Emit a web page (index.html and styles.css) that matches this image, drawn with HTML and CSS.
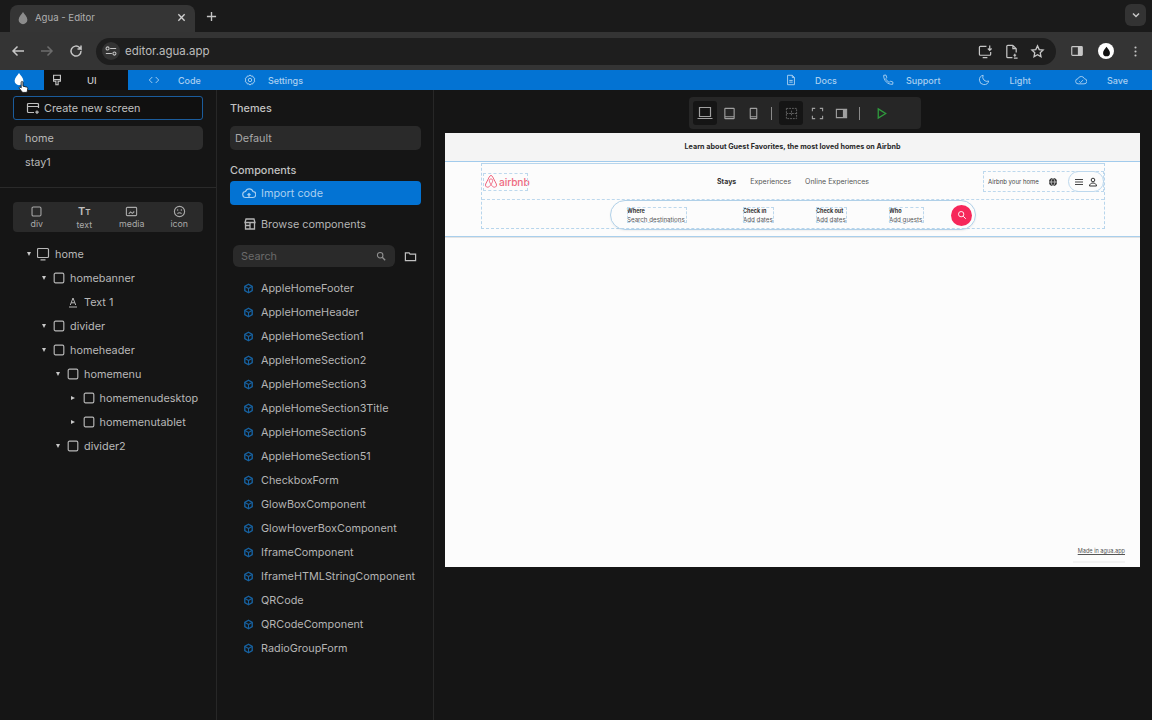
FILE: index.html
```html
<!DOCTYPE html>
<html lang="en">
<head>
<meta charset="utf-8">
<title>Agua - Editor</title>
<link rel="stylesheet" href="styles.css">
</head>
<body>
<svg class="defs" aria-hidden="true">
  <symbol id="drop" viewBox="0 0 16 16"><path d="M8 1C6 4 3 6.600 3 10a5 5 0 0 0 10 0C13 6.600 10 4 8 1z" fill="currentColor"/></symbol>
  <symbol id="box" viewBox="0 0 16 16"><rect x="2.500" y="2.500" width="11" height="11" rx="1.500" fill="none" stroke="currentColor" stroke-width="1.300"/></symbol>
  <symbol id="cube" viewBox="0 0 16 16"><g fill="none" stroke="currentColor" stroke-width="2" stroke-linejoin="round"><path d="M8 1.800l5.400 3.100v6.200L8 14.200l-5.400-3.100V4.900z"/><path d="M2.800 5L8 8l5.200-3M8 8v6" stroke-width="1.500"/></g></symbol>
</svg>

<header class="tabstrip">
  <div class="tab">
    <svg class="ic14 dim"><use href="#drop"/></svg>
    <span class="tab-title">Agua - Editor</span>
    <svg class="tab-close" viewBox="0 0 10 10"><path d="M1.500 1.500l7 7M8.500 1.500l-7 7" stroke="currentColor" stroke-width="1.500"/></svg>
  </div>
  <svg class="tab-new" viewBox="0 0 12 12"><path d="M6 1v10M1 6h10" stroke="currentColor" stroke-width="1.500"/></svg>
  <div class="tab-menu"><svg viewBox="0 0 10 10"><path d="M2 3.500l3 3 3-3" fill="none" stroke="currentColor" stroke-width="1.500"/></svg></div>
</header>

<div class="toolbar">
  <svg class="tb-ic" viewBox="0 0 16 16"><path d="M14 8H3M7.500 3.500L3 8l4.500 4.500" fill="none" stroke="currentColor" stroke-width="1.500"/></svg>
  <svg class="tb-ic faded" viewBox="0 0 16 16"><path d="M2 8h11M8.500 3.500L13 8l-4.500 4.500" fill="none" stroke="currentColor" stroke-width="1.500"/></svg>
  <svg class="tb-ic" viewBox="0 0 16 16"><path d="M13 8a5 5 0 1 1-1.500-3.500L13 6V2.500M13 6H9.500" fill="none" stroke="currentColor" stroke-width="1.500"/></svg>
  <div class="omnibox">
    <span class="site-ic"><svg viewBox="0 0 14 14"><g fill="none" stroke="currentColor" stroke-width="1.200"><path d="M6 4h7M1 10h7"/><circle cx="3" cy="4" r="1.800"/><circle cx="11" cy="10" r="1.800"/></g></svg></span>
    <span class="url">editor.agua.app</span>
    <span class="omni-actions">
      <svg class="om-ic" viewBox="0 0 16 16"><g fill="none" stroke="currentColor" stroke-width="1.300"><path d="M9 2.500H2.500a1 1 0 0 0-1 1V11a1 1 0 0 0 1 1h10a1 1 0 0 0 1-1V8.500M5 14.500h5"/><path d="M12.500 1.500v5M10.500 4.800l2 2 2-2"/></g></svg>
      <svg class="om-ic" viewBox="0 0 16 16"><g fill="none" stroke="currentColor" stroke-width="1.300"><path d="M9.500 1.500H4a1 1 0 0 0-1 1v11a1 1 0 0 0 1 1h5M9.500 1.500L13 5v4M9.500 1.500V5H13"/><path d="M11.500 10.500v3M10 12h3M10.500 15h4"/></g></svg>
      <svg class="om-ic" viewBox="0 0 16 16"><path d="M8 2l1.800 3.900 4.200.5-3.100 2.900.8 4.200L8 11.400l-3.700 2.100.8-4.200L2 6.400l4.200-.5z" fill="none" stroke="currentColor" stroke-width="1.400"/></svg>
    </span>
  </div>
  <svg class="tb-ic side-ic" viewBox="0 0 16 16"><rect x="2" y="3" width="12" height="10" rx="1" fill="none" stroke="currentColor" stroke-width="1.300"/><rect x="9" y="3" width="5" height="10" fill="currentColor"/></svg>
  <span class="avatar"><svg viewBox="0 0 16 16"><use href="#drop"/></svg></span>
  <svg class="tb-ic kebab" viewBox="0 0 16 16"><g fill="currentColor"><circle cx="8" cy="3" r="1.300"/><circle cx="8" cy="8" r="1.300"/><circle cx="8" cy="13" r="1.300"/></g></svg>
</div>

<nav class="appbar">
  <div class="ab-logo">
    <svg class="ab-drop"><use href="#drop"/></svg>
    <svg class="cursor" viewBox="0 0 14 16"><path d="M4.500 1.500c1 0 1.300.7 1.300 1.500v4l4 1c1.300.4 1.700 1 1.600 2l-.5 3c-.1.800-.5 1.300-1.300 1.300H6c-.6 0-1-.2-1.400-.7L1.500 9.500c-.6-.8.400-1.800 1.300-1.200l.9.800V3c0-.8.200-1.500.8-1.500z" fill="#fff" stroke="#111" stroke-width="1"/></svg>
  </div>
  <div class="ab-item ab-ui">
    <svg class="ab-ic" viewBox="0 0 14 14"><path d="M3 1.500h8v5H3zM3 6.500h8v2H8.300v4H5.700v-4H3z" fill="none" stroke="currentColor" stroke-width="1.300"/></svg>
    <span>UI</span>
  </div>
  <div class="ab-item ab-code">
    <svg class="ab-ic" viewBox="0 0 14 14"><path d="M5 3.500L1.500 7 5 10.500M9 3.500L12.500 7 9 10.500" fill="none" stroke="currentColor" stroke-width="1.100"/></svg>
    <span>Code</span>
  </div>
  <div class="ab-item ab-settings">
    <svg class="ab-ic" viewBox="0 0 14 14"><g fill="none" stroke="currentColor" stroke-width="1.100"><path d="M7 1l1.200 1.500 1.900-.2.700 1.800 1.700.9-.5 2 .5 2-1.700.9-.7 1.800-1.900-.2L7 13l-1.200-1.500-1.900.2-.7-1.800-1.700-.9.500-2-.5-2 1.700-.9.700-1.800 1.900.2z"/><circle cx="7" cy="7" r="2"/></g></svg>
    <span>Settings</span>
  </div>
  <div class="ab-item ab-docs">
    <svg class="ab-ic" viewBox="0 0 14 14"><path d="M8.500 1.500H3v11h8V4zM8.500 1.500V4H11M5 7.500h4M5 9.500h4" fill="none" stroke="currentColor" stroke-width="1.100"/></svg>
    <span>Docs</span>
  </div>
  <div class="ab-item ab-support">
    <svg class="ab-ic" viewBox="0 0 14 14"><path d="M2 1.500l2.500-.3 1.200 3L4.300 5.500c.7 1.700 2.300 3.300 4.200 4.200l1.300-1.400 3 1.200-.3 2.500c-6 .5-10.800-4.500-10.500-10.500z" fill="none" stroke="currentColor" stroke-width="1.100"/></svg>
    <span>Support</span>
  </div>
  <div class="ab-item ab-light">
    <svg class="ab-ic" viewBox="0 0 14 14"><path d="M6 1.500a5.500 5.500 0 1 0 6.500 6.700A5 5 0 0 1 6 1.500z" fill="none" stroke="currentColor" stroke-width="1.100"/></svg>
    <span>Light</span>
  </div>
  <div class="ab-item ab-save">
    <svg class="ab-ic" viewBox="0 0 14 14"><path d="M4 11.500a3 3 0 0 1-.5-6A4 4 0 0 1 11 5.500a3 3 0 0 1-.5 6zM5 8.500l1.500 1.500L9.500 7" fill="none" stroke="currentColor" stroke-width="1.100"/></svg>
    <span>Save</span>
  </div>
</nav>

<main class="editor">
  <aside class="screens">
    <div class="screens-top">
      <button class="btn-create">
        <svg class="ic14" viewBox="0 0 14 14"><path d="M12.500 7V3.500a1 1 0 0 0-1-1h-9a1 1 0 0 0-1 1v7a1 1 0 0 0 1 1H8M1.500 5.500h11M11 9.500v3.500M9.300 11.200h3.500" fill="none" stroke="currentColor" stroke-width="1.200"/></svg>
        Create new screen
      </button>
      <div class="screen-row active">home</div>
      <div class="screen-row">stay1</div>
    </div>
    <div class="palette-wrap">
      <div class="palette">
        <div class="pal-item"><svg class="ic13"><use href="#box"/></svg><span>div</span></div>
        <div class="pal-item"><span class="tt-ic">T<small>T</small></span><span>text</span></div>
        <div class="pal-item"><svg class="ic13" viewBox="0 0 14 14"><g fill="none" stroke="currentColor" stroke-width="1.200"><rect x="1.500" y="2.500" width="11" height="9" rx="1"/><path d="M4 9.500l2-2 2 1.500 2-2"/></g></svg><span>media</span></div>
        <div class="pal-item"><svg class="ic13" viewBox="0 0 14 14"><g fill="none" stroke="currentColor" stroke-width="1.200"><circle cx="7" cy="7" r="5.500"/><path d="M4.800 9.300c1.200-1.300 3.200-1.300 4.400 0"/></g><circle cx="5" cy="5.500" r=".8" fill="currentColor"/><circle cx="9" cy="5.500" r=".8" fill="currentColor"/></svg><span>icon</span></div>
      </div>
    </div>
    <ul class="tree">
      <li class="t t0"><i class="caret"></i><svg class="ic14" viewBox="0 0 14 14"><path d="M1.500 1.500h9a1 1 0 0 1 1 1v7a1 1 0 0 1-1 1h-9a1 1 0 0 1-1-1v-7a1 1 0 0 1 1-1zM3.500 12.800h5" fill="none" stroke="currentColor" stroke-width="1.200"/></svg><span>home</span></li>
      <li class="t t1"><i class="caret"></i><svg class="ic14"><use href="#box"/></svg><span>homebanner</span></li>
      <li class="t t2"><i class="caret none"></i><svg class="ic14" viewBox="0 0 14 14"><path d="M4.300 10L7 3l2.700 7M5.200 7.800h3.600M3 12h8" fill="none" stroke="currentColor" stroke-width="1"/></svg><span>Text 1</span></li>
      <li class="t t1"><i class="caret"></i><svg class="ic14"><use href="#box"/></svg><span>divider</span></li>
      <li class="t t1"><i class="caret"></i><svg class="ic14"><use href="#box"/></svg><span>homeheader</span></li>
      <li class="t t2"><i class="caret"></i><svg class="ic14"><use href="#box"/></svg><span>homemenu</span></li>
      <li class="t t3"><i class="caret side"></i><svg class="ic14"><use href="#box"/></svg><span>homemenudesktop</span></li>
      <li class="t t3"><i class="caret side"></i><svg class="ic14"><use href="#box"/></svg><span>homemenutablet</span></li>
      <li class="t t2"><i class="caret"></i><svg class="ic14"><use href="#box"/></svg><span>divider2</span></li>
    </ul>
  </aside>

  <section class="library">
    <h2 class="lib-h themes-h">Themes</h2>
    <div class="theme-select">Default</div>
    <h2 class="lib-h comp-h">Components</h2>
    <button class="btn-import">
      <svg class="ic14" viewBox="0 0 14 14"><path d="M4 11.500a3 3 0 0 1-.5-6A4 4 0 0 1 11 5.500a3 3 0 0 1-.5 6zM7 11V7.500M5.500 9L7 7.500 8.500 9" fill="none" stroke="currentColor" stroke-width="1.200"/></svg>
      Import code
    </button>
    <div class="browse">
      <svg class="ic14" viewBox="0 0 14 14"><path d="M2 5.500L3 2h8l1 3.500zM2.500 5.500V12h9V5.500M7 5.500V12M2.500 8.500H7" fill="none" stroke="currentColor" stroke-width="1.300"/></svg>
      Browse components
    </div>
    <div class="search-row">
      <div class="search">
        <span>Search</span>
        <svg viewBox="0 0 12 12"><circle cx="5" cy="5" r="3.300" fill="none" stroke="currentColor" stroke-width="1.300"/><path d="M7.500 7.500L11 11" stroke="currentColor" stroke-width="1.600"/></svg>
      </div>
      <svg class="folder" viewBox="0 0 14 14"><path d="M1.500 3h4l1 1.500h6v7h-11z" fill="none" stroke="currentColor" stroke-width="1.300"/></svg>
    </div>
    <ul class="comp-list">
      <li><svg class="cube"><use href="#cube"/></svg>AppleHomeFooter</li>
      <li><svg class="cube"><use href="#cube"/></svg>AppleHomeHeader</li>
      <li><svg class="cube"><use href="#cube"/></svg>AppleHomeSection1</li>
      <li><svg class="cube"><use href="#cube"/></svg>AppleHomeSection2</li>
      <li><svg class="cube"><use href="#cube"/></svg>AppleHomeSection3</li>
      <li><svg class="cube"><use href="#cube"/></svg>AppleHomeSection3Title</li>
      <li><svg class="cube"><use href="#cube"/></svg>AppleHomeSection5</li>
      <li><svg class="cube"><use href="#cube"/></svg>AppleHomeSection51</li>
      <li><svg class="cube"><use href="#cube"/></svg>CheckboxForm</li>
      <li><svg class="cube"><use href="#cube"/></svg>GlowBoxComponent</li>
      <li><svg class="cube"><use href="#cube"/></svg>GlowHoverBoxComponent</li>
      <li><svg class="cube"><use href="#cube"/></svg>IframeComponent</li>
      <li><svg class="cube"><use href="#cube"/></svg>IframeHTMLStringComponent</li>
      <li><svg class="cube"><use href="#cube"/></svg>QRCode</li>
      <li><svg class="cube"><use href="#cube"/></svg>QRCodeComponent</li>
      <li><svg class="cube"><use href="#cube"/></svg>RadioGroupForm</li>
    </ul>
  </section>

  <section class="stage">
    <div class="stage-tools">
      <span class="st-btn on"><svg class="st-lg" viewBox="0 0 16 14"><path d="M2.500 1.500h11v9h-11zM.5 12.500h15" fill="none" stroke="currentColor" stroke-width="1.200"/></svg></span>
      <span class="st-btn"><svg class="st-ic" viewBox="0 0 14 14"><path d="M2.500 1.500h9a.5.500 0 0 1 .5.500v10a.5.500 0 0 1-.5.500h-9A.5.500 0 0 1 2 12V2a.5.500 0 0 1 .5-.5zM2 10.500h10" fill="none" stroke="currentColor" stroke-width="1.200"/></svg></span>
      <span class="st-btn"><svg class="st-ic" viewBox="0 0 14 14"><path d="M4 1.500h6a.5.500 0 0 1 .5.500v10a.5.500 0 0 1-.5.500H4a.5.500 0 0 1-.5-.5V2a.5.500 0 0 1 .5-.5zM3.500 10.500h7" fill="none" stroke="currentColor" stroke-width="1.200"/></svg></span>
      <i class="st-sep"></i>
      <span class="st-btn on st-grid"><svg class="st-ic" viewBox="0 0 14 14"><path d="M1.500 1.500h11v11h-11zM1.500 7h11M7 4v6" fill="none" stroke="#666" stroke-width="1" stroke-dasharray="2 1"/></svg></span>
      <span class="st-btn"><svg class="st-ic" viewBox="0 0 14 14"><path d="M1.500 4.500v-3h3M9.500 1.500h3v3M12.500 9.500v3h-3M4.500 12.500h-3v-3" fill="none" stroke="currentColor" stroke-width="1.200"/></svg></span>
      <span class="st-btn"><svg class="st-ic" viewBox="0 0 14 14"><path d="M1.500 2.500h11v9h-11z" fill="none" stroke="currentColor" stroke-width="1.200"/><rect x="8.500" y="3" width="3.500" height="8" fill="currentColor"/></svg></span>
      <i class="st-sep"></i>
      <span class="st-btn play"><svg class="st-ic" viewBox="0 0 14 14"><path d="M3.500 2l8 5-8 5z" fill="none" stroke="currentColor" stroke-width="1.400"/></svg></span>
    </div>

    <div class="canvas">
      <div class="banner">Learn about Guest Favorites, the most loved homes on Airbnb</div>
      <div class="home-header">
        <div class="hh-box">
          <div class="hh-top">
            <div class="logo dashed">
              <svg viewBox="0 0 14 15"><path d="M7 1.500c-.8 0-1.300.6-1.700 1.400L1.700 10c-.7 1.500.2 3.200 1.800 3.200 1.300 0 2.500-1 3.500-2.700 1 1.700 2.200 2.700 3.500 2.700 1.600 0 2.500-1.700 1.800-3.200L8.700 2.900C8.300 2.100 7.800 1.500 7 1.500zM7 10.500C6 9 5.300 7.600 5.300 6.500 5.300 5.500 6 5 7 5s1.700.5 1.700 1.500C8.700 7.600 8 9 7 10.500z" fill="none" stroke="#f0677f" stroke-width="1"/></svg>
              <span>airbnb</span>
            </div>
            <div class="hh-nav">
              <b>Stays</b><span>Experiences</span><span>Online Experiences</span>
            </div>
            <div class="hh-right dashed">
              <span>Airbnb your home</span>
              <svg class="globe" viewBox="0 0 12 12"><circle cx="6" cy="6" r="4.800" fill="#333"/><path d="M1.200 6h9.600M6 1.200c-3 3-3 6.600 0 9.600M6 1.200c3 3 3 6.600 0 9.600" fill="none" stroke="#fff" stroke-width=".7"/></svg>
              <span class="pill">
                <svg viewBox="0 0 10 10"><path d="M1 2.500h8M1 5h8M1 7.500h8" stroke="#444" stroke-width="1"/></svg>
                <svg viewBox="0 0 10 10"><circle cx="5" cy="3" r="1.800" fill="none" stroke="#333"/><path d="M1.500 9c0-4 7-4 7 0z" fill="none" stroke="#333"/></svg>
              </span>
            </div>
          </div>
          <div class="hh-bottom">
            <div class="searchbar">
              <div class="sb-f sb-where dashed"><b>Where</b><span>Search destinations</span></div>
              <div class="sb-f sb-in dashed"><b>Check in</b><span>Add dates</span></div>
              <div class="sb-f sb-out dashed"><b>Check out</b><span>Add dates</span></div>
              <div class="sb-f sb-who dashed"><b>Who</b><span>Add guests</span></div>
              <span class="sb-go"><svg viewBox="0 0 12 12"><circle cx="5" cy="5" r="3.200" fill="none" stroke="#fff" stroke-width="1.100"/><path d="M7.500 7.500l3 3" stroke="#fff" stroke-width="1.200"/></svg></span>
            </div>
          </div>
        </div>
      </div>
      <div class="canvas-body">
        <a class="made">Made in agua.app</a>
        <i class="made-ghost"></i>
      </div>
    </div>
  </section>
</main>
</body>
</html>
```
FILE: styles.css
```css
* { box-sizing: border-box; margin: 0; padding: 0; }
html, body { width: 1152px; height: 720px; overflow: hidden; }
body { background: #151515; color: #c9c9c9; font-family: Inter, "Liberation Sans", sans-serif; display: flex; flex-direction: column; }
.defs { display: none; }
ul { list-style: none; }
button { font-family: inherit; }
svg { display: block; flex: none; }
.ic14 { width: 14px; height: 14px; }
.ic13 { width: 13px; height: 13px; }
.dim { color: #8c8c8c; }

/* browser tab strip */
.tabstrip { height: 32px; background: #1a1a1a; display: flex; align-items: flex-end; padding-left: 10px; flex: none; }
.tab { width: 185px; height: 27px; background: #353535; border-radius: 8px 8px 0 0; display: flex; align-items: center; padding: 0 9px 2px 6px; gap: 5px; color: #b0b0b0; }
.tab-title { font-size: 9.600px; flex: 1; }
.tab-close { width: 9px; height: 9px; color: #d0d0d0; }
.tab-new { width: 11px; height: 11px; margin: 0 0 10px 11px; color: #c4c4c4; }
.tab-menu { width: 21px; height: 22px; background: #333; border-radius: 6px; margin: 0 6px 6px auto; display: flex; align-items: center; justify-content: center; color: #c8c8c8; }
.tab-menu svg { width: 10px; height: 10px; }

/* browser toolbar */
.toolbar { height: 38px; background: #343434; display: flex; align-items: center; padding-left: 10px; flex: none; color: #c6c6c6; }
.tb-ic { width: 16px; height: 16px; margin-right: 13px; }
.faded { color: #6c6c6c; }
.omnibox { width: 960px; height: 27px; margin-left: -1px; background: #1e1e1e; border-radius: 14px; display: flex; align-items: center; padding: 0 6px; }
.site-ic { width: 18px; height: 18px; border-radius: 50%; background: #333; display: flex; align-items: center; justify-content: center; }
.site-ic svg { width: 12px; height: 12px; }
.url { font-size: 11.500px; margin-left: 5px; color: #bcbcbc; }
.omni-actions { margin-left: auto; display: flex; gap: 11px; margin-right: 5px; }
.om-ic { width: 15px; height: 15px; }
.side-ic { margin: 0 0 0 14px; width: 14px; height: 14px; }
.avatar { width: 16px; height: 16px; border-radius: 50%; background: #fff; color: #111; margin-left: 14px; display: flex; align-items: center; justify-content: center; }
.avatar svg { width: 11px; height: 11px; }
.kebab { margin: 0 0 0 15px; width: 13px; height: 13px; }

/* app bar */
.appbar { height: 20px; background: #0373d3; display: flex; align-items: stretch; flex: none; color: #a9cff0; font-size: 9px; font-weight: 500; }
.ab-logo { width: 44px; position: relative; }
.ab-drop { width: 14px; height: 14px; color: #fff; margin: 2px 0 0 12px; }
.cursor { position: absolute; left: 18px; top: 10px; width: 12px; height: 14px; }
.ab-item { display: flex; align-items: center; }
.ab-ic { width: 12px; height: 12px; }
.ab-ui { width: 84px; background: #111; padding-left: 7px; gap: 24px; color: #c8c8c8; font-size: 9.500px; }
.ab-code { margin-left: 20px; gap: 18px; }
.ab-settings { margin-left: 43px; gap: 12px; }
.ab-docs { margin-left: 482px; gap: 18px; }
.ab-support { margin-left: 45px; gap: 12px; }
.ab-light { margin-left: 38px; gap: 19px; }
.ab-save { margin-left: 44px; gap: 20px; }

/* editor panes */
.editor { flex: 1; display: flex; min-height: 0; }
.screens { width: 217px; flex: none; border-right: 1px solid #272727; }
.screens-top { padding: 6px 13px 13px; height: 98px; border-bottom: 1px solid #2a2a2a; }
.btn-create { width: 190px; height: 24px; background: #101010; border: 1px solid #1b5c9c; border-radius: 3px; color: #c0c0c0; font-size: 10.850px; display: flex; align-items: center; gap: 4px; padding-left: 12px; margin-bottom: 6px; }
.screen-row { height: 24px; line-height: 25px; font-size: 10.850px; padding-left: 12px; border-radius: 5px; color: #b8b8b8; }
.screen-row.active { background: #2e2e2e; }
.palette-wrap { padding: 14px 13px 10px; }
.palette { height: 30px; background: #2a2a2a; border-radius: 4px; display: grid; grid-template-columns: repeat(4, 47.500px); font-size: 8.800px; color: #a9a9a9; }
.pal-item { display: flex; flex-direction: column; align-items: center; justify-content: center; gap: 1px; line-height: 10px; }
.tt-ic { font-size: 11px; line-height: 13px; font-weight: 600; color: #c0c0c0; }
.tt-ic small { font-size: 8px; }
.t { height: 24px; display: flex; align-items: center; font-size: 10.850px; color: #b8b8b8; }
.t0 { padding-left: 27px; }
.t1 { padding-left: 42px; }
.t2 { padding-left: 56px; }
.t3 { padding-left: 71px; }
.t svg { margin-right: 4px; }
.caret { width: 0; height: 0; margin-right: 6px; border-left: 2.500px solid transparent; border-right: 2.500px solid transparent; border-top: 4px solid #c8c8c8; }
.caret.side { border-top: 2.500px solid transparent; border-bottom: 2.500px solid transparent; border-left: 4px solid #c8c8c8; border-right: 0; margin-right: 6.500px; }
.caret.none { border-top-color: transparent; }

.library { width: 217px; flex: none; padding: 0 12px 0 13px; border-right: 1px solid #272727; }
.lib-h { font-size: 10.850px; font-weight: 500; color: #c2c2c2; line-height: 14px; }
.themes-h { margin-top: 11px; }
.theme-select { height: 24px; line-height: 25px; margin-top: 11px; background: #2a2a2a; border-radius: 5px; font-size: 10.850px; padding-left: 5px; color: #a8a8a8; }
.comp-h { margin-top: 13px; }
.btn-import { width: 191px; height: 24px; margin-top: 4px; background: #0373d3; border: 0; border-radius: 4px; color: #a9cff0; font-size: 10.850px; display: flex; align-items: center; padding-left: 12px; gap: 5px; }
.browse { height: 24px; margin-top: 7px; display: flex; align-items: center; gap: 4px; padding-left: 13px; font-size: 10.850px; color: #b4b4b4; }
.search-row { display: flex; align-items: center; margin: 9px 0 9px 3px; }
.search { width: 162px; height: 22px; background: #2a2a2a; border-radius: 6px; display: flex; align-items: center; justify-content: space-between; padding: 0 9px 0 8px; font-size: 10.850px; color: #6a6a6a; }
.search svg { width: 10px; height: 10px; color: #909090; }
.folder { width: 13px; height: 13px; margin-left: 9px; color: #c0c0c0; }
.comp-list li { height: 24px; display: flex; align-items: center; font-size: 10.850px; color: #b4b4b4; padding-left: 13px; gap: 7px; white-space: nowrap; }
.cube { width: 11px; height: 11px; color: #17619f; }

/* stage */
.stage { flex: 1; display: flex; flex-direction: column; padding: 7px 12px 0 11px; }
.stage-tools { width: 232px; height: 32px; margin-left: 244px; background: #262626; border-radius: 4px; display: flex; align-items: center; padding-left: 4px; color: #a0a0a0; }
.st-btn { width: 24px; height: 24px; border-radius: 3px; display: flex; align-items: center; justify-content: center; }
.st-btn.on { background: #151515; }
.st-btn.play { color: #2f9a3d; margin-left: 4px; }
.st-grid { margin: 0 2px 0 2px; }
.st-lg { width: 16px; height: 14px; }
.st-ic { width: 13px; height: 13px; }
.st-sep { width: 1px; height: 13px; background: #8a8a8a; margin: 0 5px 0 6px; }
.canvas { width: 695px; height: 434px; margin-top: 4px; background: #fcfcfc; color: #222; display: flex; flex-direction: column; font-size: 6.700px; flex: none; }
.banner { height: 29px; background: #f4f4f4; border-bottom: 1px solid #a2cbec; display: flex; align-items: center; justify-content: center; font-size: 7.200px; font-weight: 700; color: #2a2a2a; padding-bottom: 1px; }
.home-header { height: 75px; padding: 1px 35px 0 36px; border-bottom: 1px solid #a9cfec; box-shadow: 0 1px 0 #e4e4e4; }
.hh-box { height: 66px; border: 1px dashed #b7d5ec; border-top: 1px solid #b7d5ec; display: flex; flex-direction: column; }
.dashed { outline: 1px dashed #bdd8ed; outline-offset: -1px; }
.hh-top { height: 36px; flex: none; display: flex; align-items: center; position: relative; border-bottom: 1px dashed #bdd8ed; }
.logo { width: 45px; height: 18px; margin-left: 1px; padding-left: 1px; display: flex; align-items: center; gap: 1px; color: #ee6a80; }
.logo svg { width: 14px; height: 15px; }
.logo span { font-size: 10.200px; font-weight: 500; letter-spacing: -.1px; }
.hh-nav { margin-left: 189px; display: flex; gap: 14px; font-size: 7px; color: #555; }
.hh-nav b { font-weight: 700; color: #333; }
.hh-right { margin-left: auto; width: 121px; height: 21px; display: flex; align-items: center; padding-left: 5px; font-size: 6px; color: #444; }
.globe { width: 10px; height: 10px; margin-left: 9px; }
.pill { width: 36px; height: 21px; margin-left: auto; border: 1px solid #bdd8ed; border-radius: 11px; display: flex; align-items: center; justify-content: center; gap: 4px; }
.pill svg { width: 10px; height: 10px; }
.hh-bottom { flex: 1; position: relative; }
.searchbar { width: 366px; height: 30px; margin: 0 0 0 128px; border: 1px solid #b0d0e8; border-radius: 15px; display: flex; align-items: center; padding-left: 16px; box-shadow: 0 1px 2px rgba(0,0,0,.06); }
.sb-f { display: flex; flex-direction: column; line-height: 7.500px; font-size: 6.200px; color: #555; padding-top: 1px; }
.sb-f b { font-size: 5.500px; font-weight: 700; color: #333; }
.sb-where { width: 60px; }
.sb-in { width: 31px; margin-left: 56px; }
.sb-out { width: 31px; margin-left: 42px; }
.sb-who { width: 35px; margin-left: 42px; }
.sb-go { width: 21px; height: 21px; border-radius: 50%; background: #f6275a; margin-left: 27px; display: flex; align-items: center; justify-content: center; }
.sb-go svg { width: 10px; height: 10px; }
.canvas-body { flex: 1; display: flex; flex-direction: column; align-items: flex-end; justify-content: flex-end; padding: 0 15px 4px 0; }
.made { font-size: 5.600px; color: #555; text-decoration: underline; }
.made-ghost { width: 52px; height: 2px; margin-top: 7px; background: #f2f2f2; }
```
